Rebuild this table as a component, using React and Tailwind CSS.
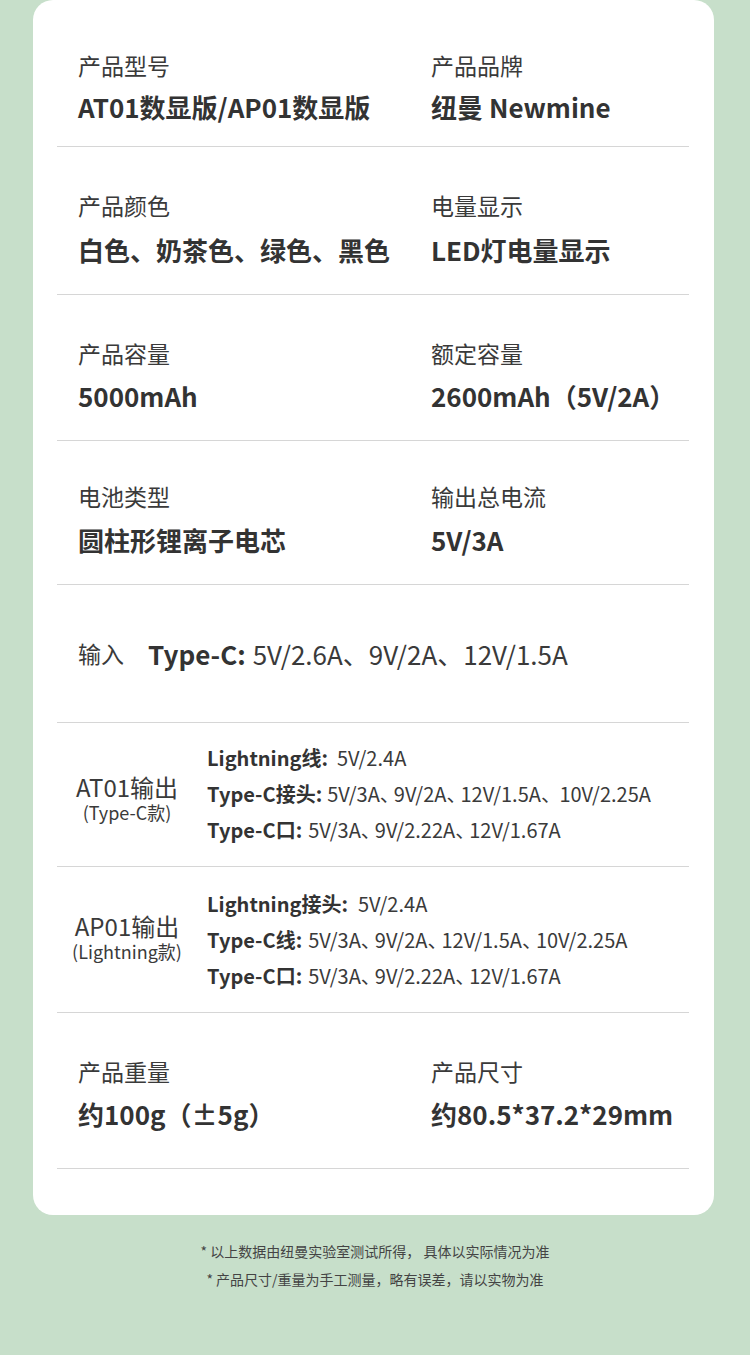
import React from "react";

const F = { fontFamily: '"Noto Sans CJK SC", "Noto Sans", sans-serif' };

function Narrow({ text, cls }) {
  const parts = text.split("、");
  return (
    <>
      {parts.map((p, i) => (
        <React.Fragment key={i}>
          {p}
          {i < parts.length - 1 && <span className={cls}>、</span>}
        </React.Fragment>
      ))}
    </>
  );
}

function TwoCol({ h, pt, mt, items }) {
  return (
    <div className="grid grid-cols-[374px_1fr] border-b border-[#d6d6d6] box-border" style={{ height: h, paddingTop: pt }}>
      {items.map(([label, value], i) => (
        <div key={i} className={i === 0 ? "pl-[21px]" : ""}>
          <div className="text-[23px] leading-[30px] text-[#3a3a3a]">{label}</div>
          <div className="text-[26px] leading-[36px] font-bold text-[#333]" style={{ marginTop: mt }}>{value}</div>
        </div>
      ))}
    </div>
  );
}

function OutRow({ h, rpt, lpt, title, sub, lines }) {
  return (
    <div className="flex border-b border-[#d6d6d6] box-border" style={{ height: h }}>
      <div className="w-[140px] text-center" style={{ paddingTop: lpt }}>
        <div className="text-[24px] leading-[27px] text-[#3a3a3a]">{title}</div>
        <div className="text-[18px] leading-[24px] text-[#3a3a3a]">{sub}</div>
      </div>
      <div className="pl-[10px]" style={{ paddingTop: rpt }}>
        {lines.map(([b, v, gap], i) => (
          <div key={i} className="text-[20px] leading-[36px] text-[#3a3a3a] whitespace-nowrap">
            <span className="font-bold text-[#333]">{b}</span>
            <span style={{ marginLeft: gap }}>
              <Narrow text={v} cls="tracking-[-0.3em]" />
            </span>
          </div>
        ))}
      </div>
    </div>
  );
}

export default function App() {
  return (
    <div className="min-h-[1355px] w-[750px] bg-[#c7dfca]" style={F}>
      <div className="ml-[33px] w-[681px] bg-white rounded-[20px] pl-[24px] pr-[25px] pb-[46px]">
        <TwoCol h={147} pt={50} mt={9} items={[["产品型号", "AT01数显版/AP01数显版"], ["产品品牌", "纽曼 Newmine"]]} />
        <TwoCol h={148} pt={43} mt={12} items={[["产品颜色", "白色、奶茶色、绿色、黑色"], ["电量显示", "LED灯电量显示"]]} />
        <TwoCol h={146} pt={43} mt={10} items={[["产品容量", "5000mAh"], ["额定容量", "2600mAh（5V/2A）"]]} />
        <TwoCol h={144} pt={40} mt={11} items={[["电池类型", "圆柱形锂离子电芯"], ["输出总电流", "5V/3A"]]} />
        <div className="h-[138px] flex items-center pl-[21px] border-b border-[#d6d6d6] box-border text-[#3a3a3a] whitespace-nowrap">
          <span className="text-[23px]">输入</span>
          <span className="ml-[24px] text-[26px] font-bold text-[#333]">Type-C:</span>
          <span className="ml-[7px] text-[26px]">5V/2.6A、9V/2A、12V/1.5A</span>
        </div>
        <OutRow
          h={144}
          rpt={17}
          lpt={50}
          title="AT01输出"
          sub="(Type-C款)"
          lines={[
            ["Lightning线:", "5V/2.4A", 9],
            ["Type-C接头:", "5V/3A、9V/2A、12V/1.5A、 10V/2.25A", 5],
            ["Type-C口:", "5V/3A、9V/2.22A、12V/1.67A", 6],
          ]}
        />
        <OutRow
          h={146}
          rpt={19}
          lpt={45}
          title="AP01输出"
          sub="(Lightning款)"
          lines={[
            ["Lightning接头:", "5V/2.4A", 10],
            ["Type-C线:", "5V/3A、9V/2A、12V/1.5A、10V/2.25A", 6],
            ["Type-C口:", "5V/3A、9V/2.22A、12V/1.67A", 6],
          ]}
        />
        <TwoCol h={156} pt={43} mt={10} items={[["产品重量", "约100g（±5g）"], ["产品尺寸", "约80.5*37.2*29mm"]]} />
      </div>
      <div className="mt-[22px] text-center text-[14px] leading-[28px] text-[#444]">
        <div>* 以上数据由纽曼实验室测试所得， 具体以实际情况为准</div>
        <div>* 产品尺寸/重量为手工测量，略有误差，请以实物为准</div>
      </div>
    </div>
  );
}
